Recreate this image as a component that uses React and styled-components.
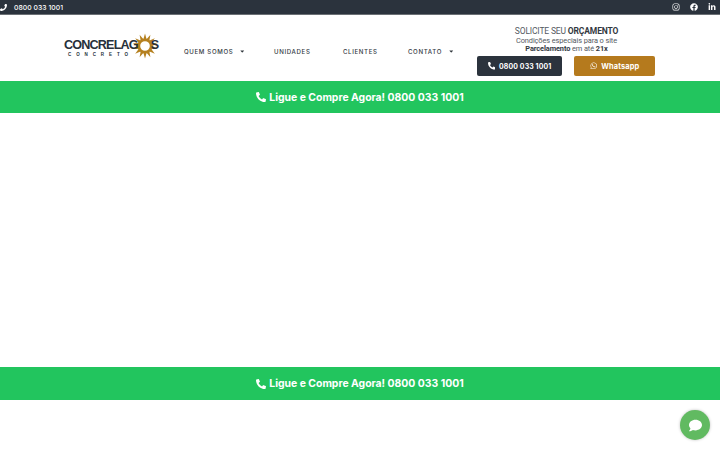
import React from "react";
import styled, { createGlobalStyle } from "styled-components";
import { FaPhoneAlt, FaInstagram, FaFacebook, FaLinkedinIn, FaWhatsapp, FaCaretDown, FaComment } from "react-icons/fa";

const Global = createGlobalStyle`
  html, body { margin: 0; padding: 0; background: #fff; overflow: hidden; }
  * { box-sizing: border-box; }
  body { font-family: "Inter", "Liberation Sans", sans-serif; }
`;

const Page = styled.div`
  width: 720px;
  height: 450px;
  position: relative;
  overflow: hidden;
`;
const TopBar = styled.div`
  height: 15px;
  background: #2b333d;
  border-bottom: 1px solid #6b7075;
  display: flex;
  align-items: center;
  justify-content: space-between;
  color: #fff;
`;
const TopPhone = styled.div`
  display: flex;
  align-items: center;
  gap: 7px;
  font-size: 6.8px;
  font-weight: 500;
  letter-spacing: 0.05px;
  svg { font-size: 7px; transform: scaleX(-1); }
`;
const Socials = styled.div`
  display: flex;
  align-items: center;
  gap: 10px;
  padding-right: 4px;
  svg { width: 8px; height: 8px; display: block; }
`;
const Header = styled.header`
  height: 66px;
  display: flex;
  align-items: center;
  padding-left: 64px;
`;
const Logo = styled.div`
  width: 95px;
  height: 27px;
  position: relative;
  flex: none;
  margin-top: 1px;
`;
const LogoWord = styled.div`
  position: relative;
  z-index: 1;
  display: flex;
  align-items: center;
  height: 12px;
  margin-top: 4px;
  font-family: "Liberation Sans", sans-serif;
  font-size: 12.6px;
  font-weight: 700;
  letter-spacing: -0.82px;
  color: #27303a;
  white-space: nowrap;
`;
const LogoS = styled.span`
  margin-left: 13px;
`;
const LogoSub = styled.div`
  font-family: "Liberation Sans", sans-serif;
  font-size: 4.5px;
  font-weight: 700;
  letter-spacing: 4.9px;
  line-height: 5px;
  margin-top: 1px;
  padding-left: 4px;
  color: #27303a;
  white-space: nowrap;
`;
const Sun = styled.svg`
  position: absolute;
  left: 68px;
  top: -2px;
  width: 26px;
  height: 26px;
`;
const Nav = styled.nav`
  display: flex;
  align-items: center;
  margin-left: 25px;
  width: 270px;
  margin-top: 7px;
  flex: none;
`;
const NavItem = styled.div`
  display: flex;
  align-items: center;
  gap: 6px;
  width: ${(p) => p.$w}px;
  font-size: 6.1px;
  font-weight: 500;
  letter-spacing: 0.65px;
  color: #33393f;
  white-space: nowrap;
  svg { font-size: 6.5px; flex: none; }
`;
const Cta = styled.div`
  width: 178px;
  margin-left: 23px;
  flex: none;
  display: flex;
  flex-direction: column;
  align-items: center;
  margin-top: 7px;
  font-family: "Roboto", sans-serif;
  color: #54595f;
`;
const CtaTitle = styled.div`
  font-size: 8.5px;
  line-height: 9px;
  letter-spacing: -0.15px;
  margin-bottom: 1px;
  padding-left: 1px;
  b { font-weight: 700; color: #33393f; }
`;
const CtaNote = styled.div`
  font-size: 7.4px;
  line-height: 7.5px;
  letter-spacing: -0.1px;
  text-align: center;
  padding-left: 1px;
  b { font-weight: 700; color: #33393f; }
`;
const CtaButtons = styled.div`
  display: flex;
  gap: 12px;
  margin-top: 4px;
  width: 178px;
`;
const Button = styled.div`
  height: 20px;
  width: ${(p) => p.$w}px;
  background: ${(p) => p.$bg};
  border-radius: 2px;
  display: flex;
  align-items: center;
  justify-content: center;
  gap: 4px;
  color: #fff;
  font-size: ${(p) => p.$fs}px;
  font-weight: 700;
  letter-spacing: 0.15px;
  font-family: "Inter", sans-serif;
  svg { font-size: 7.5px; }
`;
const GreenBar = styled.div`
  height: ${(p) => p.$h}px;
  background: #22c55e;
  display: flex;
  align-items: center;
  justify-content: center;
  gap: 3px;
  color: #fff;
  font-size: 10.4px;
  font-weight: 700;
  svg { font-size: 10px; }
`;
const Blank = styled.div`
  height: 254px;
`;
const Chat = styled.div`
  position: absolute;
  left: 680px;
  top: 410px;
  width: 30px;
  height: 30px;
  border-radius: 50%;
  background: #61ba61;
  box-shadow: 0 0 3px rgba(0, 0, 0, 0.25);
  display: flex;
  align-items: center;
  justify-content: center;
  color: #fff;
  svg { font-size: 13px; }
`;

const rays = Array.from({ length: 14 }, (_, i) => (i * 360) / 14);

export default function App() {
  return (
    <Page>
      <Global />
      <TopBar>
        <TopPhone>
          <FaPhoneAlt />
          <span>0800 033 1001</span>
        </TopPhone>
        <Socials>
          <FaInstagram />
          <FaFacebook />
          <FaLinkedinIn />
        </Socials>
      </TopBar>
      <Header>
        <Logo>
          <LogoWord>
            CONCRELAG<LogoS>S</LogoS>
          </LogoWord>
          <LogoSub>CONCRETO</LogoSub>
          <Sun viewBox="0 0 28 28">
            {rays.map((a) => (
              <polygon key={a} points="12.2,7 15.8,7 14,0.5" fill="#b5801f" transform={`rotate(${a} 14 14)`} />
            ))}
            <path d="M14 6a8 8 0 1 0 0 16a8 8 0 1 0 0-16zM14 8.8a5.2 5.2 0 1 1 0 10.4a5.2 5.2 0 1 1 0-10.4z" fill="#b5801f" fillRule="evenodd" />
          </Sun>
        </Logo>
        <Nav>
          <NavItem $w={90}>QUEM SOMOS <FaCaretDown /></NavItem>
          <NavItem $w={69}>UNIDADES</NavItem>
          <NavItem $w={65}>CLIENTES</NavItem>
          <NavItem $w={46}>CONTATO <FaCaretDown /></NavItem>
        </Nav>
        <Cta>
          <CtaTitle>SOLICITE SEU <b>ORÇAMENTO</b></CtaTitle>
          <CtaNote>Condições especiais para o site<br /><b>Parcelamento</b> em até <b>21x</b></CtaNote>
          <CtaButtons>
            <Button $w={85} $bg="#2b333d" $fs={6.9}><FaPhoneAlt />0800 033 1001</Button>
            <Button $w={81} $bg="#b57a1d" $fs={7.4}><FaWhatsapp />Whatsapp</Button>
          </CtaButtons>
        </Cta>
      </Header>
      <GreenBar $h={32}><FaPhoneAlt />Ligue e Compre Agora! 0800 033 1001</GreenBar>
      <Blank />
      <GreenBar $h={33}><FaPhoneAlt />Ligue e Compre Agora! 0800 033 1001</GreenBar>
      <Chat><FaComment /></Chat>
    </Page>
  );
}
